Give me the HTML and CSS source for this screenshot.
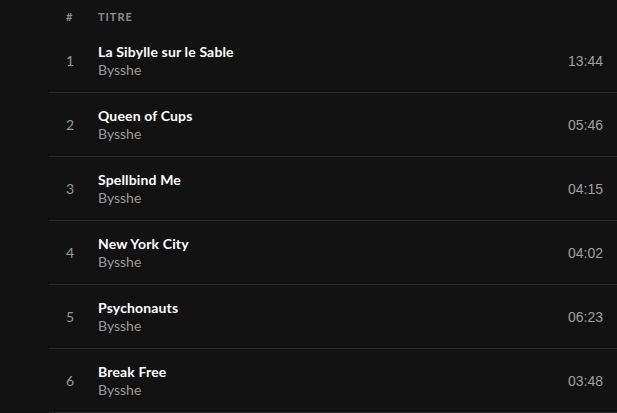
FILE: index.html
```html
<!DOCTYPE html>
<html lang="fr">
<head>
<meta charset="utf-8">
<link rel="stylesheet" href="styles.css">
</head>
<body>
<div class="tracklist">
  <div class="head">
    <span class="num">#</span>
    <span class="titlecol">Titre</span>
  </div>
  <div class="row">
    <span class="num">1</span>
    <div class="info"><div class="title">La Sibylle sur le Sable</div><div class="artist">Bysshe</div></div>
    <span class="dur">13:44</span>
  </div>
  <div class="row">
    <span class="num">2</span>
    <div class="info"><div class="title">Queen of Cups</div><div class="artist">Bysshe</div></div>
    <span class="dur">05:46</span>
  </div>
  <div class="row">
    <span class="num">3</span>
    <div class="info"><div class="title">Spellbind Me</div><div class="artist">Bysshe</div></div>
    <span class="dur">04:15</span>
  </div>
  <div class="row">
    <span class="num">4</span>
    <div class="info"><div class="title">New York City</div><div class="artist">Bysshe</div></div>
    <span class="dur">04:02</span>
  </div>
  <div class="row">
    <span class="num">5</span>
    <div class="info"><div class="title">Psychonauts</div><div class="artist">Bysshe</div></div>
    <span class="dur">06:23</span>
  </div>
  <div class="row">
    <span class="num">6</span>
    <div class="info"><div class="title">Break Free</div><div class="artist">Bysshe</div></div>
    <span class="dur">03:48</span>
  </div>
</div>
</body>
</html>
```
FILE: styles.css
```css
html, body {
  margin: 0;
  padding: 0;
  background: #121212;
  height: 100%;
  overflow: hidden;
}
body {
  font-family: Lato, "Liberation Sans", sans-serif;
}
.tracklist {
  margin-left: 49px;
}
.head {
  height: 29px;
  padding-top: 3px;
  box-sizing: border-box;
  display: flex;
  align-items: center;
  color: #8e8e8e;
  font-size: 11px;
  font-weight: 700;
  text-transform: uppercase;
  letter-spacing: 1px;
}
.num {
  width: 49px;
  box-sizing: border-box;
  padding-left: 17px;
  flex: none;
}
.row {
  height: 64px;
  box-sizing: border-box;
  border-bottom: 1px solid #2a2a2a;
  display: flex;
  align-items: center;
}
.row .num {
  color: #9a9a9a;
  font-size: 14px;
  font-family: Lato, sans-serif;
}
.info {
  flex: 1;
  display: flex;
  flex-direction: column;
  gap: 1px;
}
.title {
  color: #ffffff;
  font-size: 14px;
  font-weight: 700;
  line-height: 17px;
  letter-spacing: 0.15px;
}
.artist {
  color: #9a9a9a;
  font-size: 14px;
  line-height: 17px;
}
.dur {
  color: #a0a0a0;
  font-family: "Liberation Sans", Arial, sans-serif;
  font-size: 14px;
  padding-right: 14px;
}
```
